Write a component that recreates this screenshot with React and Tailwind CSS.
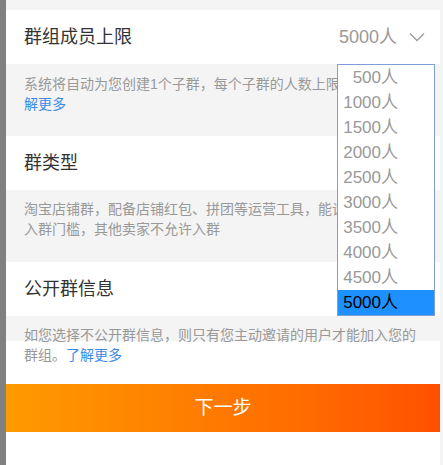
const OPTIONS = [500, 1000, 1500, 2000, 2500, 3000, 3500, 4000, 4500, 5000];

function Row({ title, children }) {
  return (
    <div className="flex h-[54px] items-center justify-between bg-white pl-[18px] pr-[15px]">
      <span className="text-[18px] text-[#333]">{title}</span>
      {children}
    </div>
  );
}

function Chevron() {
  return (
    <svg width="16" height="10" viewBox="0 0 16 10" className="ml-[12px]">
      <path d="M1 1.5 L8 8.5 L15 1.5" fill="none" stroke="#999" strokeWidth="1.3" />
    </svg>
  );
}

export default function App() {
  const selected = 5000;
  return (
    <div className="flex min-h-screen bg-[#f4f4f4] font-['Liberation_Sans','Noto_Sans_CJK_SC',sans-serif]">
      <div className="w-[6px] shrink-0 bg-[#808080]" />
      <div className="relative w-[434px] shrink-0 bg-white pt-[10px]">
        <div className="absolute left-0 right-0 top-0 h-[10px] bg-[#f4f4f4]" />

        <Row title="群组成员上限">
          <div className="flex items-center">
            <span className="text-[18px] text-[#999]">5000人</span>
            <Chevron />
          </div>
        </Row>
        <div className="h-[72px] bg-[#f4f4f4] px-[18px] pt-[10px] text-[14px] leading-[20px] text-[#999]">
          系统将自动为您创建1个子群，每个子群的人数上限为500人。了
          <span className="text-[#3d8be8]">解更多</span>
        </div>

        <Row title="群类型" />
        <div className="h-[72px] bg-[#f4f4f4] px-[18px] pt-[9px] text-[14px] leading-[20px] text-[#999]">
          淘宝店铺群，配备店铺红包、拼团等运营工具，能设置粉丝等级入群门槛，其他卖家不允许入群
        </div>

        <Row title="公开群信息" />
        <div className="h-[25px] bg-[#f4f4f4] px-[18px] pt-[9px] text-[14px] leading-[20px] text-[#999]">
          如您选择不公开群信息，则只有您主动邀请的用户才能加入您的群组。
          <span className="text-[#3d8be8]">了解更多</span>
        </div>

        <button className="mt-[43px] flex h-[48px] w-full items-center justify-center bg-gradient-to-r from-[#ff9a00] to-[#ff5000] text-[19px] text-white">
          下一步
        </button>

        <div className="absolute left-[331px] top-[64px] w-[98px] border border-[#7c9fd6] bg-white">
          {OPTIONS.map((n) => (
            <div
              key={n}
              className={
                "h-[25px] pr-[36px] text-right text-[17px] leading-[25px] " +
                (n === selected ? "bg-[#1e90ff] text-black" : "text-[#999]")
              }
            >
              {n}人
            </div>
          ))}
        </div>
      </div>
    </div>
  );
}
